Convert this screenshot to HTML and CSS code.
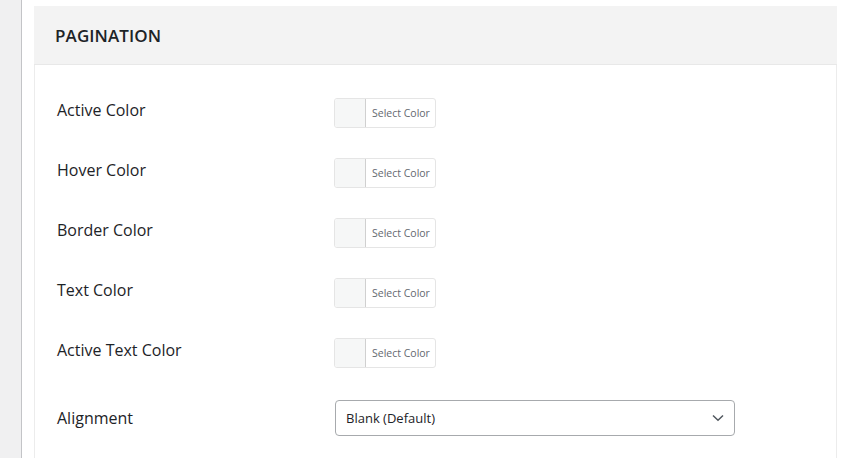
FILE: index.html
```html
<!DOCTYPE html>
<html>
<head>
<meta charset="utf-8">
<link rel="stylesheet" href="styles.css">
</head>
<body>
<div class="page">
  <div class="sidebar"></div>
  <div class="content">
    <div class="panel">
      <div class="panel-head"><h2 class="panel-title">PAGINATION</h2></div>
      <div class="panel-body">
        <div class="row"><div class="label">Active Color</div><div class="control"><button class="color-btn"><span class="swatch"></span><span class="btn-text">Select Color</span></button></div></div>
        <div class="row"><div class="label">Hover Color</div><div class="control"><button class="color-btn"><span class="swatch"></span><span class="btn-text">Select Color</span></button></div></div>
        <div class="row"><div class="label">Border Color</div><div class="control"><button class="color-btn"><span class="swatch"></span><span class="btn-text">Select Color</span></button></div></div>
        <div class="row"><div class="label">Text Color</div><div class="control"><button class="color-btn"><span class="swatch"></span><span class="btn-text">Select Color</span></button></div></div>
        <div class="row"><div class="label">Active Text Color</div><div class="control"><button class="color-btn"><span class="swatch"></span><span class="btn-text">Select Color</span></button></div></div>
        <div class="row row-select"><div class="label">Alignment</div><div class="control"><div class="select"><span class="select-text">Blank (Default)</span><svg class="chev" width="12" height="8" viewBox="0 0 12 8"><path d="M1 1.5 L6 6.2 L11 1.5" fill="none" stroke="#50575e" stroke-width="1.5"/></svg></div></div></div>
      </div>
    </div>
  </div>
</div>
</body>
</html>
```

FILE: styles.css
```css
html, body {
  margin: 0;
  padding: 0;
  background: #ffffff;
  font-family: "Open Sans", "Noto Sans", sans-serif;
  color: #1d2327;
}
.page {
  display: flex;
  height: 458px;
  overflow: hidden;
}
.sidebar {
  width: 21px;
  flex: 0 0 21px;
  background: #f0f0f1;
  border-right: 1px solid #c3c4c7;
}
.content {
  padding: 6px 0 0 12px;
  flex: 0 0 auto;
}
.panel {
  width: 801px;
  border: 1px solid #ececec;
  border-top: none;
  background: #fff;
  height: 470px;
}
.panel-head {
  background: #f3f3f3;
  height: 58px;
  border-bottom: 1px solid #e8e8e8;
  display: flex;
  align-items: center;
  padding-left: 21px;
  margin: 0 -1px;
}
.panel-title {
  margin: 0;
  font-size: 17px;
  font-weight: 600;
  letter-spacing: 0.1px;
  color: #1d2327;
  padding-top: 1px;
}
.panel-body {
  padding: 15px 0 0 22px;
}
.row {
  display: flex;
  align-items: center;
  height: 60px;
}
.row-select {
  margin-top: 3px;
  height: 70px;
}
.label {
  width: 277px;
  flex: 0 0 277px;
  font-size: 16px;
  color: #1d2327;
}
.control {
  display: flex;
  align-items: center;
}
.color-btn {
  display: flex;
  align-items: stretch;
  height: 30px;
  padding: 0;
  margin: 6px 0 0 0;
  border: 1px solid #e5e5e5;
  border-radius: 3px;
  background: #fff;
  font-family: inherit;
  cursor: pointer;
  overflow: hidden;
}
.swatch {
  width: 30px;
  background: #f6f7f7;
  border-right: 1px solid #d0d0d0;
}
.btn-text {
  display: flex;
  align-items: center;
  padding: 0 5px 1px 6px;
  font-size: 10.5px;
  color: #646970;
}
.select {
  margin-left: 1px;
  border: 1px solid #a7aaad;
  border-radius: 4px;
  display: flex;
  align-items: center;
  justify-content: space-between;
  padding: 0 10px 0 10px;
  box-sizing: border-box;
  width: 400px;
  height: 36px;
}
.select-text {
  font-size: 13px;
  color: #1d2327;
}
.chev {
  display: block;
}
```
